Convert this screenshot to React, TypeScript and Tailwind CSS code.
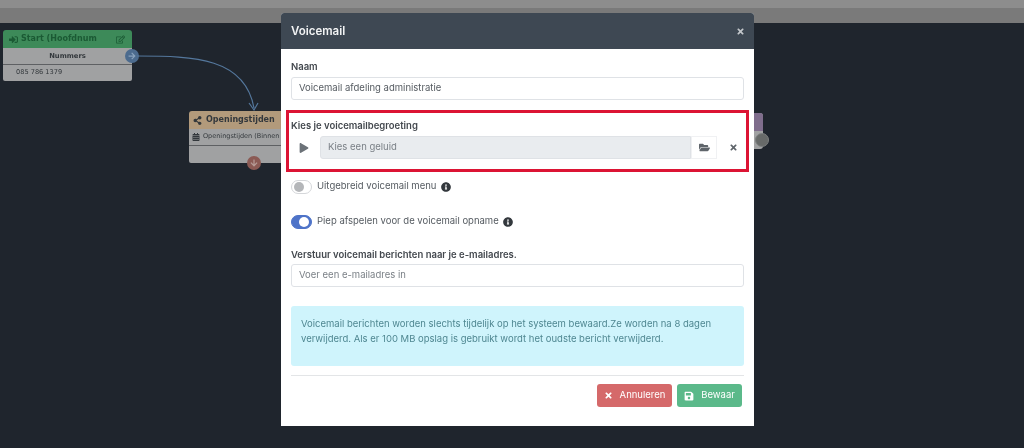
import React from 'react';
import {
  FaArrowDown,
  FaArrowRight,
  FaCalendarAlt,
  FaFolderOpen,
  FaInfoCircle,
  FaPlay,
  FaRegEdit,
  FaSave,
  FaShareAlt,
  FaSignInAlt,
  FaTimes,
} from 'react-icons/fa';

function Toggle({ on }: { on: boolean }) {
  return (
    <div className={`flex h-[14px] w-[21px] shrink-0 items-center rounded-full border px-[2px] ${on ? 'justify-end border-[#4e73c8] bg-[#4e73c8]' : 'justify-start border-[#d5d7da] bg-white'}`}>
      <div className={`h-[10px] w-[10px] rounded-full ${on ? 'bg-white' : 'bg-[#b4b6b9]'}`} />
    </div>
  );
}

function Canvas() {
  return (
    <>
      <div className="absolute left-[3px] top-[30px] w-[129px] font-['DejaVu_Sans',sans-serif] text-[#33383c]">
        <div className="flex h-[18px] items-center rounded-t-[3px] bg-[#3d8a59] pl-[6px] pr-[7px] text-[#1b5a34]">
          <FaSignInAlt className="h-[9px] w-[9px]" />
          <span className="ml-[3px] flex-1 text-[8px] font-bold">Start (Hoofdnum</span>
          <FaRegEdit className="h-[9px] w-[9px]" />
        </div>
        <div className="flex h-[17px] items-center justify-center border-b border-[#5e6063] bg-[#a0a1a2] text-[6.8px] font-bold">Nummers</div>
        <div className="flex h-[16px] items-center rounded-b-[2px] bg-[#a0a1a2] pl-[13px] text-[6.6px]">085 786 1379</div>
      </div>
      <div className="absolute left-[125px] top-[49px] flex h-[14px] w-[14px] items-center justify-center rounded-full bg-[#4c6b8e] text-[#8aa3bd]">
        <FaArrowRight className="h-[8px] w-[8px]" />
      </div>
      <svg className="absolute left-[135px] top-[50px]" width="125" height="62" fill="none" stroke="#54779c" strokeWidth="1.2">
        <path d="M2 6 C60 6 110 8 119 58" />
        <path d="M114 53 L119 60 L123 53" />
      </svg>

      <div className="absolute left-[189px] top-[111px] w-[100px] font-['DejaVu_Sans',sans-serif] text-[#33383c]">
        <div className="flex h-[18px] items-center rounded-tl-[3px] bg-[#b29a7b] pl-[4px]">
          <FaShareAlt className="h-[9px] w-[9px]" />
          <span className="ml-[4px] text-[8px] font-bold whitespace-nowrap">Openingstijden</span>
        </div>
        <div className="flex h-[17px] items-center overflow-hidden border-b border-[#5e6063] bg-[#a0a1a2] pl-[3px] text-[6.5px] whitespace-nowrap">
          <FaCalendarAlt className="mr-[3px] h-[8px] w-[8px] shrink-0" />
          Openingstijden (Binnen
        </div>
        <div className="h-[17px] rounded-bl-[2px] bg-[#a0a1a2]" />
      </div>
      <div className="absolute left-[247px] top-[156px] flex h-[14px] w-[14px] items-center justify-center rounded-full bg-[#8b5a54] text-[#b59a95]">
        <FaArrowDown className="h-[8px] w-[8px]" />
      </div>

      <div className="absolute left-[750px] top-[113px] h-[36px] w-[13px] rounded-r-[3px] bg-[#a0a1a2]">
        <div className="h-[18px] rounded-tr-[3px] bg-[#7f6d8c]" />
      </div>
      <div className="absolute left-[755px] top-[133px] h-[14px] w-[14px] rounded-full border border-[#7d8080] bg-[#676a69]" />
    </>
  );
}

function Modal() {
  return (
    <div className="absolute left-[281px] top-[13px] flex h-[413px] w-[473px] flex-col overflow-hidden rounded-t-[3px] bg-white font-['Inter',sans-serif]">
      <div className="flex h-[36px] shrink-0 items-center justify-between bg-[#3e4853] pl-[10px] pr-[9px] pt-[1px] text-[#f3f4f5]">
        <span className="text-[11.5px] font-semibold">Voicemail</span>
        <FaTimes className="h-[9px] w-[9px] text-[#c3c7cb]" />
      </div>

      <div className="flex flex-1 flex-col px-[10px] text-[9.5px] text-[#555b61]">
        <div className="mt-[11px] leading-[14px] font-semibold text-[#43484e]">Naam</div>
        <div className="mt-[3px] flex h-[23px] items-center rounded-[3px] border border-[#dfe2e6] pl-[7px]">Voicemail afdeling administratie</div>

        <div className="-mx-[5px] mt-[10px] h-[62px] border-[3px] border-[#dc1434] pl-[2px] pr-[2px]">
          <div className="mt-[6px] leading-[14px] font-semibold text-[#43484e]">Kies je voicemailbegroeting</div>
          <div className="mt-[3px] flex h-[23px] items-center">
            <div className="flex w-[26px] justify-center">
              <FaPlay className="h-[10px] w-[10px] text-[#6c7278]" />
            </div>
            <div className="ml-[3px] flex h-[23px] w-[371px] items-center rounded-l-[3px] border border-[#dfe2e6] bg-[#e9ecef] pl-[7px] text-[#7b8187]">Kies een geluid</div>
            <div className="flex h-[23px] w-[26px] items-center justify-center border border-[#f0f1f3] text-[#5f656b]">
              <FaFolderOpen className="h-[11px] w-[11px]" />
            </div>
            <div className="ml-[5px] flex h-[23px] w-[22px] items-center justify-center text-[#5f656b]">
              <FaTimes className="h-[9px] w-[9px]" />
            </div>
          </div>
        </div>

        <div className="mt-[8px] flex h-[14px] items-center">
          <Toggle on={false} />
          <span className="ml-[5px] -translate-y-[1px]">Uitgebreid voicemail menu</span>
          <FaInfoCircle className="ml-[5px] h-[10px] w-[10px] text-[#33383d]" />
        </div>
        <div className="mt-[21px] flex h-[14px] items-center">
          <Toggle on />
          <span className="ml-[5px] -translate-y-[1px]">Piep afspelen voor de voicemail opname</span>
          <FaInfoCircle className="ml-[4px] h-[10px] w-[10px] text-[#33383d]" />
        </div>

        <div className="mt-[19px] leading-[14px] font-semibold text-[#43484e]">Verstuur voicemail berichten naar je e-mailadres.</div>
        <div className="mt-[2px] flex h-[23px] items-center rounded-[3px] border border-[#dfe2e6] pl-[7px] text-[#7b8187]">Voer een e-mailadres in</div>

        <div className="mt-[19px] h-[60px] rounded-[3px] bg-[#cff4fc] px-[10px] pt-[10px] leading-[15px] text-[#4f8791]">
          Voicemail berichten worden slechts tijdelijk op het systeem bewaard.Ze worden na 8 dagen verwijderd. Als er 100 MB opslag is gebruikt wordt het oudste bericht verwijderd.
        </div>
        <div className="mt-[9px] border-t border-[#e3e5e7]" />

        <div className="mt-[8px] flex justify-end gap-[5px] pr-[2px] text-white">
          <div className="flex h-[23px] w-[75px] items-center justify-center gap-[7px] rounded-[3px] bg-[#d5696a]">
            <FaTimes className="h-[9px] w-[9px]" />
            Annuleren
          </div>
          <div className="flex h-[23px] w-[65px] items-center justify-center gap-[7px] rounded-[3px] bg-[#5bb98a]">
            <FaSave className="h-[10px] w-[10px]" />
            Bewaar
          </div>
        </div>
      </div>
    </div>
  );
}

export default function App() {
  return (
    <div className="relative flex h-[448px] w-[1024px] flex-col overflow-hidden bg-[#1f252d] blur-[0.3px]">
      <div className="h-[8px] bg-[#8d8d8d]" />
      <div className="h-[15px] bg-[#7a7a7a]" />
      <Canvas />
      <Modal />
    </div>
  );
}
